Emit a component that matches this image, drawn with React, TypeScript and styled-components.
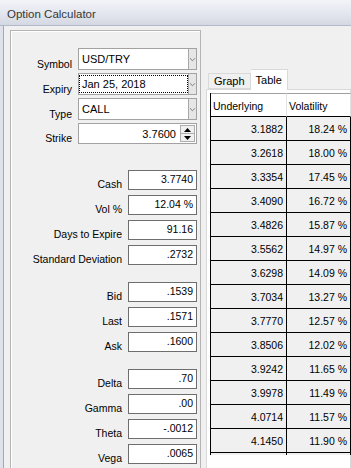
import React from 'react'
import styled, { createGlobalStyle } from 'styled-components'

const GlobalStyle = createGlobalStyle`
  html, body {
    margin: 0;
    padding: 0;
    background: #f0f0f0;
  }
  * {
    box-sizing: border-box;
  }
`

const quotes = [
  ['3.1882', '18.24 %'],
  ['3.2618', '18.00 %'],
  ['3.3354', '17.45 %'],
  ['3.4090', '16.72 %'],
  ['3.4826', '15.87 %'],
  ['3.5562', '14.97 %'],
  ['3.6298', '14.09 %'],
  ['3.7034', '13.27 %'],
  ['3.7770', '12.57 %'],
  ['3.8506', '12.02 %'],
  ['3.9242', '11.65 %'],
  ['3.9978', '11.49 %'],
  ['4.0714', '11.57 %'],
  ['4.1450', '11.90 %'],
]

const groups = [
  [
    ['Cash', '3.7740'],
    ['Vol %', '12.04 %'],
    ['Days to Expire', '91.16'],
    ['Standard Deviation', '.2732'],
  ],
  [
    ['Bid', '.1539'],
    ['Last', '.1571'],
    ['Ask', '.1600'],
  ],
  [
    ['Delta', '.70'],
    ['Gamma', '.00'],
    ['Theta', '-.0012'],
    ['Vega', '.0065'],
  ],
]

const Chevron = () => (
  <svg width="7" height="5" viewBox="0 0 7 5">
    <polyline points="0.5,1 3.5,4 6.5,1" fill="none" stroke="#6a6a6a" strokeWidth="1" />
  </svg>
)

const Combo = ({ value, focused }: { value: string; focused?: boolean }) => (
  <ComboBox>
    <ComboText focused={focused}>{value}</ComboText>
    <DropButton>
      <Chevron />
    </DropButton>
  </ComboBox>
)

const App = () => {
  return (
    <>
      <GlobalStyle />
      <Window>
        <TitleBar>Option Calculator</TitleBar>
        <Frame>
          <Inner>
            <LeftPanel>
              <TopGroup>
                <Row>
                  <Label>Symbol</Label>
                  <Combo value="USD/TRY" />
                </Row>
                <Row>
                  <Label>Expiry</Label>
                  <Combo value="Jan 25, 2018" focused />
                </Row>
                <Row>
                  <Label>Type</Label>
                  <Combo value="CALL" />
                </Row>
                <Row>
                  <Label>Strike</Label>
                  <SpinBox>
                    <SpinText>3.7600</SpinText>
                    <Spinner>
                      <SpinHalf>
                        <svg width="7" height="4" viewBox="0 0 7 4">
                          <polygon points="3.5,0 7,4 0,4" fill="#000" />
                        </svg>
                      </SpinHalf>
                      <SpinHalf>
                        <svg width="7" height="4" viewBox="0 0 7 4">
                          <polygon points="0,0 7,0 3.5,4" fill="#000" />
                        </svg>
                      </SpinHalf>
                    </Spinner>
                  </SpinBox>
                </Row>
              </TopGroup>
              {groups.map((group, i) => (
                <FieldGroup key={i} spaced={i > 0}>
                  {group.map(([label, value]) => (
                    <Row key={label}>
                      <Label>{label}</Label>
                      <Field>{value}</Field>
                    </Row>
                  ))}
                </FieldGroup>
              ))}
            </LeftPanel>
            <RightArea>
              <TabStrip>
                <Tab>Graph</Tab>
                <Tab active>Table</Tab>
              </TabStrip>
              <TabPage>
                <Grid>
                  <HeadCell>Underlying</HeadCell>
                  <HeadCell>Volatility</HeadCell>
                  {quotes.map(([u, v]) => (
                    <React.Fragment key={u}>
                      <Cell>{u}</Cell>
                      <Cell>{v}</Cell>
                    </React.Fragment>
                  ))}
                  <Cell stub />
                  <Cell stub />
                </Grid>
              </TabPage>
            </RightArea>
          </Inner>
        </Frame>
      </Window>
    </>
  )
}

const Window = styled.div`
  width: 351px;
  height: 468px;
  overflow: hidden;
  display: flex;
  flex-direction: column;
  font-family: 'Liberation Sans', Arial, sans-serif;
  font-size: 10.5px;
  color: #000;
`
const TitleBar = styled.div`
  height: 26px;
  flex-shrink: 0;
  display: flex;
  align-items: center;
  padding: 3px 0 0 7px;
  background: linear-gradient(180deg, #f3f4f8 0%, #e3e6ee 55%, #d4d8e2 100%);
  border-bottom: 1px solid #b3b9c8;
  font-size: 11.5px;
  color: #363636;
`
const Frame = styled.div`
  flex: 1;
  display: flex;
  padding-left: 3px;
  background: #dfe2eb;
  min-height: 0;
`
const Inner = styled.div`
  flex: 1;
  display: flex;
  align-items: flex-start;
  border-left: 1px solid #a8a8a8;
  background: #f0f0f0;
  padding: 4px 0 0 6px;
  min-width: 0;
`
const LeftPanel = styled.div`
  width: 191px;
  flex-shrink: 0;
  height: 460px;
  border: 1px solid #b4b4b4;
  box-shadow: inset 1px 1px 0 #ffffff;
  padding: 17px 3px 0 0;
  display: flex;
  flex-direction: column;
`
const TopGroup = styled.div`
  display: flex;
  flex-direction: column;
  gap: 3px;
`
const FieldGroup = styled.div<{ spaced?: boolean }>`
  display: flex;
  flex-direction: column;
  gap: 5px;
  margin-top: ${(p) => (p.spaced ? '17px' : '26px')};
`
const Row = styled.div`
  display: flex;
  justify-content: flex-end;
  align-items: flex-end;
`
const Label = styled.div`
  margin-right: 6px;
  line-height: 12px;
  white-space: nowrap;
`
const Field = styled.div`
  width: 69px;
  height: 20px;
  background: #fff;
  border: 1px solid #6e6e6e;
  text-align: right;
  padding-right: 3px;
  line-height: 17px;
`
const ComboBox = styled.div`
  width: 119px;
  height: 22px;
  background: #fff;
  border: 1px solid #a2a2a2;
  display: flex;
`
const ComboText = styled.div<{ focused?: boolean }>`
  flex: 1;
  margin: 1px 0 1px 0;
  padding-left: 2px;
  line-height: 17px;
  border: 1px dotted ${(p) => (p.focused ? '#000' : 'transparent')};
  font-size: 11px;
`
const DropButton = styled.div`
  width: 8px;
  background: #e6e6e6;
  border-left: 1px solid #a8a8a8;
  display: flex;
  align-items: center;
  justify-content: center;
  padding-top: 1px;
  svg {
    transform: scale(0.85);
  }
`
const SpinBox = styled.div`
  width: 119px;
  height: 21px;
  background: #fff;
  border: 1px solid #a2a2a2;
  display: flex;
  align-items: center;
`
const SpinText = styled.div`
  flex: 1;
  text-align: right;
  padding-right: 4px;
  font-size: 11px;
`
const Spinner = styled.div`
  width: 15px;
  height: 17px;
  margin-right: 1px;
  display: flex;
  flex-direction: column;
  border: 1px solid #adadad;
  background: #f0f0f0;
`
const SpinHalf = styled.div`
  flex: 1;
  display: flex;
  align-items: center;
  justify-content: center;
  & + & {
    border-top: 1px solid #adadad;
  }
`
const RightArea = styled.div`
  flex: 1;
  min-width: 0;
  margin: 39px 0 0 5px;
  display: flex;
  flex-direction: column;
  height: 420px;
`
const TabStrip = styled.div`
  height: 20px;
  display: flex;
  align-items: flex-end;
  padding-left: 2px;
`
const Tab = styled.div<{ active?: boolean }>`
  height: ${(p) => (p.active ? '21px' : '16px')};
  margin-bottom: ${(p) => (p.active ? '-1px' : '0')};
  padding: 0 5px;
  display: flex;
  align-items: center;
  background: ${(p) => (p.active ? '#fff' : '#f0f0f0')};
  border: 1px solid #d9d9d9;
  border-bottom: ${(p) => (p.active ? 'none' : '1px solid #d9d9d9')};
  border-left: ${(p) => (p.active ? 'none' : '1px solid #d9d9d9')};
  font-size: 11px;
  position: relative;
  z-index: ${(p) => (p.active ? 1 : 0)};
`
const TabPage = styled.div`
  flex: 1;
  background: #fff;
  border: 1px solid #d9d9d9;
  padding: 3px 0 0 3px;
`
const Grid = styled.div`
  display: grid;
  grid-template-columns: 76px 64px;
  grid-template-rows: repeat(15, 24px) 2px;
  border-left: 1px solid #000;
`
const HeadCell = styled.div`
  background: #fff;
  border-top: 1px solid #a0a0a0;
  border-bottom: 1px solid #000;
  border-right: 1px solid #e2e2e2;
  display: flex;
  align-items: center;
  padding: 1px 0 0 2px;
`
const Cell = styled.div<{ stub?: boolean }>`
  background: #f0f0f0;
  border-right: 1px solid #000;
  border-bottom: ${(p) => (p.stub ? 'none' : '1px solid #000')};
  display: flex;
  align-items: center;
  justify-content: flex-end;
  padding-right: 3px;
`

export default App
